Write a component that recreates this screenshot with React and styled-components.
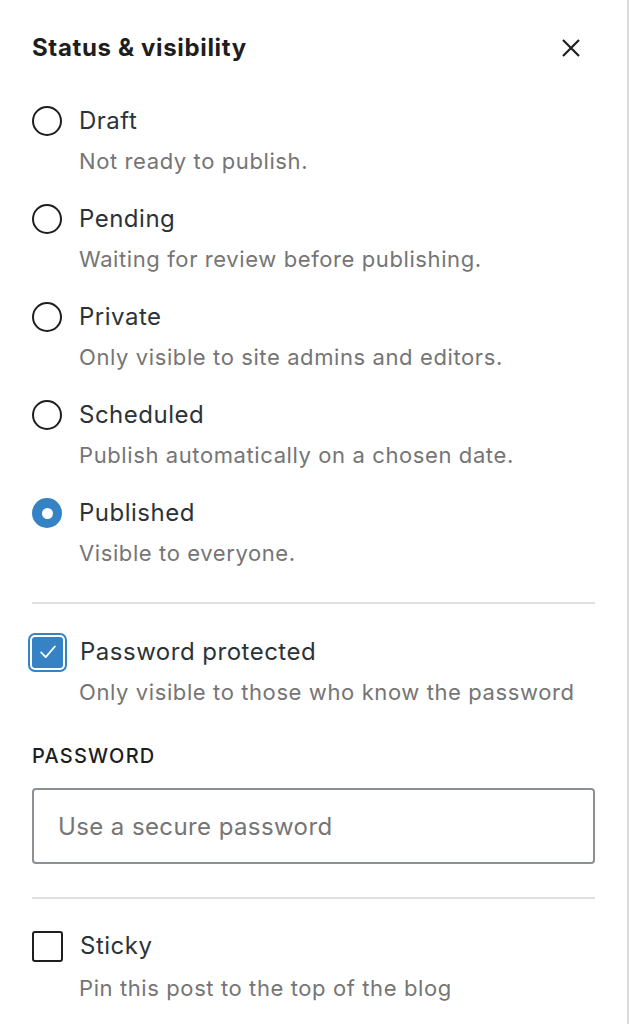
import React, { useState } from "react";
import styled, { createGlobalStyle } from "styled-components";

const GlobalStyle = createGlobalStyle`
  html, body {
    margin: 0;
    padding: 0;
    background: #fff;
  }
  body {
    font-family: Inter, "Noto Sans", "Liberation Sans", sans-serif;
    -webkit-font-smoothing: antialiased;
  }
`;

// Panel principal con borde a la derecha
const Panel = styled.div`
  width: 629px;
  min-height: 1024px;
  box-sizing: border-box;
  padding: 32px 32px 0 32px;
  border-right: 2px solid #dcdcde;
  display: flex;
  flex-direction: column;
`;

const Header = styled.div`
  display: flex;
  align-items: center;
  justify-content: space-between;
  height: 32px;
`;

const Title = styled.h2`
  margin: 0;
  font-size: 24px;
  font-weight: 700;
  letter-spacing: 0.65px;
  color: #1e1e1e;
  line-height: 32px;
`;

const CloseButton = styled.button`
  border: 0;
  background: none;
  padding: 0;
  width: 36px;
  height: 36px;
  margin-right: 6px;
  display: flex;
  align-items: center;
  justify-content: center;
  cursor: pointer;
`;

const Options = styled.div`
  display: flex;
  flex-direction: column;
  gap: 29px;
  margin-top: 42px;
`;

const Option = styled.label`
  display: flex;
  flex-direction: column;
  cursor: pointer;
`;

const Row = styled.div`
  display: flex;
  align-items: center;
  gap: 17px;
  height: 30px;
`;

const Radio = styled.span`
  width: 30px;
  height: 30px;
  box-sizing: border-box;
  border-radius: 50%;
  border: 2px solid ${(p) => (p.$checked ? "#3582c4" : "#1e1e1e")};
  background: ${(p) => (p.$checked ? "#3582c4" : "#fff")};
  display: flex;
  align-items: center;
  justify-content: center;
  flex-shrink: 0;

  &::after {
    content: "";
    display: ${(p) => (p.$checked ? "block" : "none")};
    width: 11px;
    height: 11px;
    border-radius: 50%;
    background: #fff;
  }
`;

const Box = styled.span`
  width: 31px;
  height: 31px;
  box-sizing: border-box;
  border-radius: 3px;
  border: 2px solid ${(p) => (p.$checked ? "#3582c4" : "#1e1e1e")};
  background: ${(p) => (p.$checked ? "#3582c4" : "#fff")};
  box-shadow: ${(p) => (p.$focus ? "0 0 0 2px #fff, 0 0 0 4px #3582c4" : "none")};
  display: flex;
  align-items: center;
  justify-content: center;
  flex-shrink: 0;
`;

const Label = styled.span`
  font-size: 24px;
  letter-spacing: 0.5px;
  color: #2c3338;
  line-height: 30px;
`;

const Help = styled.span`
  font-size: 22px;
  letter-spacing: 0.6px;
  color: #757575;
  line-height: 28px;
  margin-top: ${(p) => p.$gap || 11}px;
  padding-left: 47px;
`;

const Divider = styled.hr`
  width: 100%;
  margin: ${(p) => p.$top}px 0 0 0;
  border: 0;
  border-top: 2px solid #e0e0e0;
`;

const CheckOption = styled(Option)`
  margin-top: ${(p) => p.$top}px;
`;

const FieldLabel = styled.div`
  margin-top: 38px;
  font-size: 20px;
  font-weight: 500;
  color: #1e1e1e;
  line-height: 24px;
  text-transform: uppercase;
  letter-spacing: 1.2px;
`;

const Input = styled.input`
  margin-top: 20px;
  width: 100%;
  height: 76px;
  box-sizing: border-box;
  border: 2px solid #8c8f94;
  border-radius: 4px;
  padding: 0 24px;
  font-family: inherit;
  font-size: 24px;
  letter-spacing: 0.4px;
  color: #1e1e1e;
  outline: none;

  &::placeholder {
    color: #757575;
  }
`;

const statuses = [
  { id: "draft", label: "Draft", help: "Not ready to publish." },
  { id: "pending", label: "Pending", help: "Waiting for review before publishing." },
  { id: "private", label: "Private", help: "Only visible to site admins and editors." },
  { id: "future", label: "Scheduled", help: "Publish automatically on a chosen date." },
  { id: "publish", label: "Published", help: "Visible to everyone." },
];

function Check() {
  return (
    <svg width="22" height="22" viewBox="0 0 24 24" fill="none">
      <path d="M4.5 12.5l5 5L19.5 6" stroke="#fff" strokeWidth="2" strokeLinecap="round" strokeLinejoin="round" />
    </svg>
  );
}

export default function App() {
  const [status, setStatus] = useState("publish");
  const [protect, setProtect] = useState(true);
  const [sticky, setSticky] = useState(false);

  return (
    <>
      <GlobalStyle />
      <Panel>
        <Header>
          <Title>Status &amp; visibility</Title>
          <CloseButton aria-label="Close">
            <svg width="20" height="20" viewBox="0 0 20 20">
              <path d="M2 2L18 18M18 2L2 18" stroke="#1e1e1e" strokeWidth="2.2" />
            </svg>
          </CloseButton>
        </Header>

        <Options>
          {statuses.map((s) => (
            <Option key={s.id} onClick={() => setStatus(s.id)}>
              <Row>
                <Radio $checked={status === s.id} />
                <Label>{s.label}</Label>
              </Row>
              <Help>{s.help}</Help>
            </Option>
          ))}
        </Options>

        <Divider $top={35} />

        <CheckOption $top={33} onClick={() => setProtect(!protect)}>
          <Row>
            <Box $checked={protect} $focus={protect}>{protect && <Check />}</Box>
            <Label>Password protected</Label>
          </Row>
          <Help>Only visible to those who know the password</Help>
        </CheckOption>

        <FieldLabel>Password</FieldLabel>
        <Input placeholder="Use a secure password" />

        <Divider $top={33} />

        <CheckOption $top={32} onClick={() => setSticky(!sticky)}>
          <Row>
            <Box $checked={sticky}>{sticky && <Check />}</Box>
            <Label>Sticky</Label>
          </Row>
          <Help $gap={13}>Pin this post to the top of the blog</Help>
        </CheckOption>
      </Panel>
    </>
  );
}
